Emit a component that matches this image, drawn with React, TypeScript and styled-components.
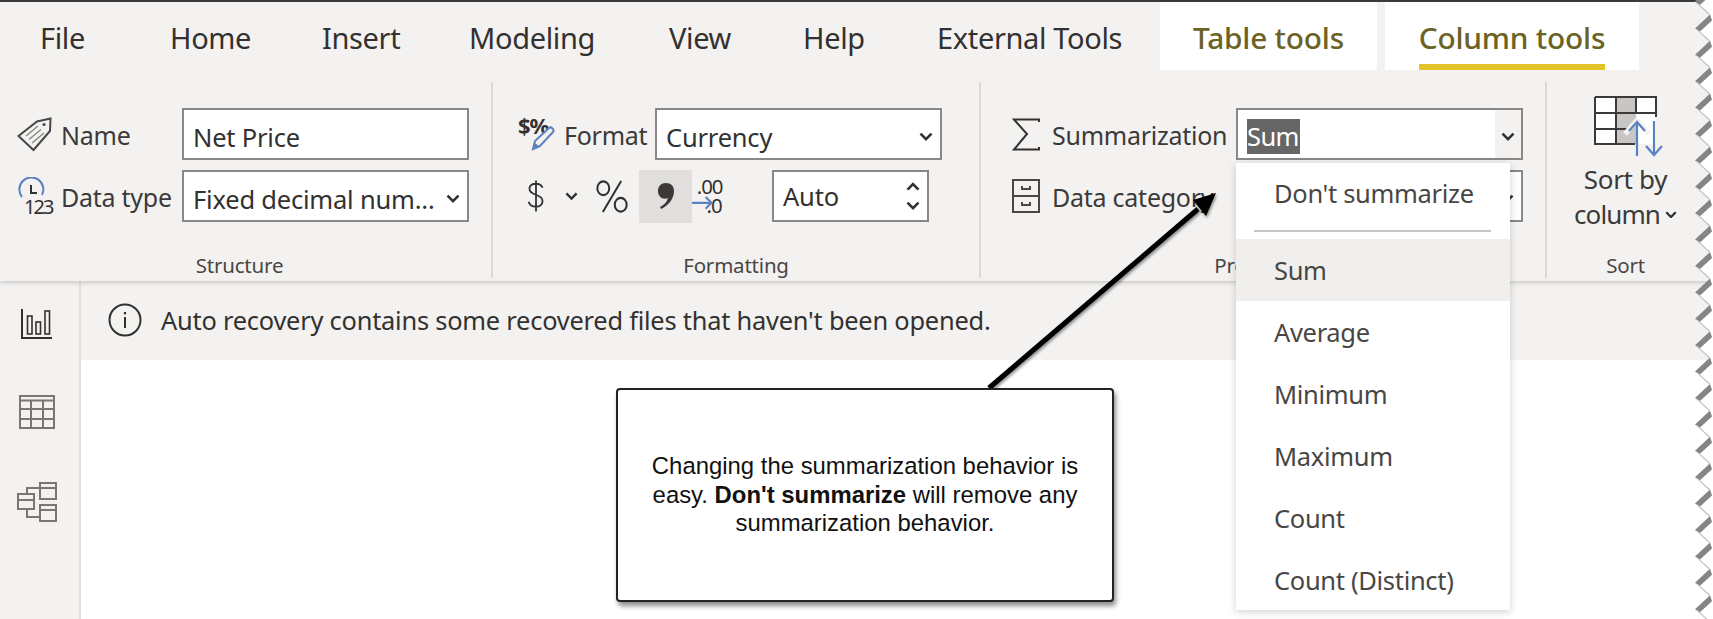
import React from "react";
import styled, { createGlobalStyle } from "styled-components";

const Global = createGlobalStyle`
  html, body { margin: 0; padding: 0; background: #fff; }
  * { box-sizing: border-box; }
`;
const UI = `"Noto Sans", "Open Sans", sans-serif`;

const Page = styled.div`
  position: relative; width: 1713px; height: 619px; overflow: hidden; background: #fff;
  font-family: ${UI}; color: #323130; display: flex; flex-direction: column;
`;
const Ribbon = styled.div`
  height: 281px; background: #f3f2f1; border-top: 2px solid #3a3a3a; flex: none;
  position: relative; z-index: 2; box-shadow: 0 1px 5px rgba(0,0,0,.22);
`;
const TabBar = styled.div`
  height: 68px; display: grid; padding-left: 40px; align-items: stretch;
  grid-template-columns: 130px 152px 147px 200px 134px 134px 223px 217px 8px 254px;
  grid-template-rows: 68px;
`;
const Tab = styled.div`
  font-size: 29px; letter-spacing: -0.35px; line-height: 72px; white-space: nowrap;
`;
const ToolTab = styled.div`
  background: #fff; color: #6b6226; font-size: 29.8px; font-weight: 500; letter-spacing: -0.2px;
  text-align: center; line-height: 72px; white-space: nowrap; overflow: hidden;
`;
const Underline = styled.div`
  width: fit-content; margin: 0 auto; height: 68px; border-bottom: 6px solid #e3c52a;
`;
const Groups = styled.div`
  display: flex; height: 196px; margin-top: 12px;
`;
const Group = styled.div<{ $w: number; $pad: number; $last?: boolean }>`
  width: ${p => p.$w}px; padding-left: ${p => p.$pad}px; padding-top: 26px; flex: none;
  position: relative; display: flex; flex-direction: column; gap: 10px;
  border-right: ${p => (p.$last ? "none" : "2px solid #dcdad8")};
`;
const GroupLabel = styled.div<{ $inset?: number }>`
  position: absolute; left: 0; right: ${p => p.$inset ?? 0}px; bottom: 0; text-align: center; font-size: 20.5px;
  color: #484644; line-height: 26px; letter-spacing: -0.2px;
`;
const Row = styled.div`
  height: 52px; display: flex; align-items: center;
`;
const IconSlot = styled.div<{ $w: number }>`
  width: ${p => p.$w}px; flex: none; display: flex; align-items: center;
`;
const FieldLabel = styled.div<{ $w: number }>`
  width: ${p => p.$w}px; flex: none; font-size: 25px; letter-spacing: -0.25px; color: #3b3a39; white-space: nowrap;
  padding-top: 2px;
`;
const Field = styled.div<{ $w: number }>`
  width: ${p => p.$w}px; height: 52px; flex: none; background: #fff; border: 2px solid #8a8886;
  display: flex; align-items: center; justify-content: space-between; padding: 5px 7px 0 9px;
  font-size: 25.5px; letter-spacing: -0.2px; white-space: nowrap; position: relative;
`;
const AutoField = styled(Field)`
  padding-top: 0;
`;
const Selected = styled.span`
  background: #666; color: #fff; height: 35px; line-height: 35px; display: inline-block; letter-spacing: -0.6px; width: 53px;
`;
const ChevronCell = styled.div`
  position: absolute; right: 0; top: 0; bottom: 0; width: 26px; background: #f3f2f1; padding-top: 5px;
  display: flex; align-items: center; justify-content: center;
`;
const FormatRow = styled.div`
  height: 54px; margin-top: -1px; display: flex; align-items: center; margin-left: 9px;
`;
const GlyphBtn = styled.div<{ $w: number; $on?: boolean; $pl?: number }>`
  width: ${p => p.$w}px; height: 53px; flex: none; background: ${p => (p.$on ? "#e1dfdd" : "transparent")};
  display: flex; align-items: center; justify-content: ${p => (p.$pl !== undefined ? "flex-start" : "center")};
  padding-left: ${p => p.$pl ?? 0}px;
`;
const Stepper = styled.div`
  display: flex; flex-direction: column; gap: 10px;
`;
const SortCol = styled.div`
  display: flex; flex-direction: column; align-items: center; margin-top: -12px;
`;
const SortGraphic = styled.div`
  margin-left: 12px; margin-bottom: 4px; height: 62px;
`;
const SortText = styled.div<{ $tight?: boolean }>`
  font-size: 26px; letter-spacing: ${p => (p.$tight ? "-0.9px" : "-0.3px")}; line-height: 35px; color: #3b3a39; white-space: nowrap;
  display: flex; align-items: center; gap: 5px;
`;
const Body = styled.div`
  flex: 1; display: flex; min-height: 0;
`;
const Sidebar = styled.div`
  width: 81px; flex: none; background: #f3f2f1; border-right: 2px solid #e1dfdd;
  display: flex; flex-direction: column; align-items: center; padding: 27px 5px 0 0;
`;
const SideIcon = styled.div<{ $h: number }>`
  height: ${p => p.$h}px; display: flex; justify-content: center; flex: none;
`;
const Main = styled.div`
  flex: 1; display: flex; flex-direction: column;
`;
const Notice = styled.div`
  height: 79px; background: #f3f2f1; display: flex; align-items: center; padding-left: 27px; gap: 19px;
  font-size: 25.4px; letter-spacing: -0.22px; padding-bottom: 2px;
`;
const Menu = styled.div`
  position: absolute; z-index: 4; left: 1236px; top: 163px; width: 274px; height: 447px;
  background: #fff; box-shadow: 0 2px 8px rgba(0,0,0,.18); display: flex; flex-direction: column;
`;
const MenuItem = styled.div<{ $on?: boolean }>`
  height: 62px; padding-left: 38px; line-height: 62px; flex: none; font-size: 25.5px; letter-spacing: -0.32px;
  background: ${p => (p.$on ? "#f0efed" : "transparent")}; color: #484644;
`;
const MenuTop = styled(MenuItem)`
  height: 60px; line-height: 60px;
`;
const MenuRule = styled.div`
  height: 2px; margin: 7px 19px 7px 18px; background: #c8c6c4; flex: none;
`;
const Callout = styled.div`
  position: absolute; z-index: 6; left: 616px; top: 388px; width: 498px; height: 214px;
  background: #fff; border: 2px solid #222; border-radius: 4px; box-shadow: 2px 4px 5px rgba(0,0,0,.45);
  display: flex; align-items: center; justify-content: center; text-align: center; padding: 0 24px;
  font-family: "Liberation Sans", Arial, sans-serif; font-size: 23.9px; line-height: 28.8px; color: #111;
`;
const ArrowLayer = styled.svg`
  position: absolute; z-index: 5; left: 960px; top: 170px; overflow: visible;
`;
const TornEdge = styled.svg`
  position: absolute; z-index: 7; right: 0; top: 0;
`;

const Chev = ({ w = 14, up = false, sw = 2.6 }: { w?: number; up?: boolean; sw?: number }) => (
  <svg width={w} height={w * 0.65} viewBox="0 0 14 9" fill="none">
    <path d={up ? "M1.5 7.5 7 2l5.5 5.5" : "M1.5 1.5 7 7l5.5-5.5"} stroke="#323130" strokeWidth={sw} />
  </svg>
);

const TagIcon = () => (
  <svg width="35" height="35" viewBox="0 0 35 35" fill="none" stroke="#4a4847" strokeWidth="2">
    <path d="M1.5 19 20 4.5 33.5 1.5 33 14 16.5 33z" />
    <circle cx="27" cy="7.5" r="1.6" fill="#4a4847" stroke="none" />
    <path d="M9 19l12-10M12 22.5l12-10M15 26l12-10" strokeWidth="1.4" stroke="#8a8886" />
  </svg>
);
const TypeIcon = () => (
  <svg width="42" height="38" viewBox="0 0 42 38" fill="none">
    <path d="M5 20A12 12 0 1 1 25 18" stroke="#5b82c0" strokeWidth="2" />
    <path d="M14 8v8h6" stroke="#323130" strokeWidth="2" />
    <text x="7" y="37" fontFamily="'Noto Sans', sans-serif" fontSize="20" letterSpacing="-2" fill="#323130">123</text>
  </svg>
);
const FormatIcon = () => (
  <svg width="42" height="36" viewBox="0 0 42 36" fill="none">
    <text x="0" y="18" fontFamily="'Noto Sans', sans-serif" fontSize="22" fontWeight="700" letterSpacing="-1.2" fill="#323130">$%</text>
    <path d="M15 33l2-8L31 12c2-2 6 2 4 4L22 30z" fill="#f3f2f1" stroke="#5b82c0" strokeWidth="2" />
    <path d="M15 34l2-7 5 4z" fill="#5b82c0" />
  </svg>
);
const SigmaIcon = () => (
  <svg width="28" height="33" viewBox="0 0 28 33" fill="none" stroke="#323130" strokeWidth="2">
    <path d="M27 4V1.5H2L15 16 2 31.5h25V29" />
  </svg>
);
const CategoryIcon = () => (
  <svg width="28" height="34" viewBox="0 0 28 34" fill="none" stroke="#4a4847" strokeWidth="2">
    <rect x="1" y="1" width="26" height="32" />
    <path d="M1 17h26M10 7v3h8V7M10 23v3h8v-3" />
  </svg>
);
const Dollar = () => (
  <svg width="20" height="38" viewBox="0 0 22 40" fill="none" stroke="#323130" strokeWidth="2.2">
    <path d="M19 10c-1-3-4-5-8-5-5 0-8 2-8 6 0 9 16 6 16 15 0 4-3 7-8 7-5 0-8-2-9-6M11 1v38" />
  </svg>
);
const Percent = () => (
  <svg width="34" height="33" viewBox="0 0 36 36" fill="none" stroke="#323130" strokeWidth="2.2">
    <ellipse cx="8.5" cy="9" rx="6.5" ry="7.5" />
    <ellipse cx="27.5" cy="27" rx="6.5" ry="7.5" />
    <path d="M28 1 8 35" />
  </svg>
);
const Comma = () => (
  <svg width="18" height="28" viewBox="0 0 18 28">
    <path d="M9 1c5 0 8 3 8 8 0 8-6 15-13 18l-1-2c4-2 7-5 8-9-1 .5-2 .7-3 .7-4 0-7-3-7-7.700s3-8 8-8z" fill="#3b3a39" />
  </svg>
);
const Decimals = () => (
  <svg width="36" height="38" viewBox="0 0 36 38" fill="none">
    <text x="5" y="17" fontFamily="'Noto Sans', sans-serif" fontSize="21" letterSpacing="-1.2" fill="#323130">.00</text>
    <text x="15" y="36" fontFamily="'Noto Sans', sans-serif" fontSize="21" letterSpacing="-1" fill="#323130">.0</text>
    <path d="M0 26h20M14 20l6 6-6 6" stroke="#5b82c0" strokeWidth="2.2" />
  </svg>
);
const SortIcon = () => (
  <svg width="76" height="62" viewBox="0 0 76 62" fill="none">
    <rect x="1" y="1" width="61" height="47" fill="#fff" />
    <rect x="23" y="1" width="19" height="47" fill="#c8c6c4" />
    <path d="M1 1h61v20M1 1v47h40M1 17h61M1 33h34M22 1v47M42 1v16" stroke="#3b3a39" strokeWidth="2" />
    <path d="M31 38 43 24l12 14" stroke="#f3f2f1" strokeWidth="5" />
    <path d="M43 26v34M35 35l8-9 8 9" stroke="#5b82c0" strokeWidth="2.2" />
    <path d="M60 25v34M52 50l8 9 8-9" stroke="#5b82c0" strokeWidth="2.2" />
  </svg>
);
const ReportIcon = () => (
  <svg width="32" height="32" viewBox="0 0 32 32" fill="none" stroke="#323130" strokeWidth="1.6">
    <path d="M1 1v29h30" strokeWidth="2" />
    <rect x="6.5" y="8" width="4.500" height="18" />
    <rect x="15" y="14" width="4.500" height="12" />
    <rect x="24" y="3" width="4.500" height="23" />
  </svg>
);
const TableIcon = () => (
  <svg width="36" height="34" viewBox="0 0 36 34" fill="none" stroke="#797775" strokeWidth="2">
    <rect x="1" y="1" width="34" height="32" />
    <path d="M1 5.500h34M1 14h34M1 24h34M12 6v27M24 6v27" />
  </svg>
);
const ModelIcon = () => (
  <svg width="40" height="40" viewBox="0 0 40 40" fill="none" stroke="#797775" strokeWidth="2">
    <rect x="1" y="12" width="16" height="15" />
    <path d="M1 18h16M23 1h16v16H23zM23 6h16M23 23h16v16H23zM23 28h16M10 12V6h13M10 27v8h13" />
  </svg>
);
const InfoIcon = () => (
  <svg width="34" height="34" viewBox="0 0 34 34" fill="none" stroke="#323130" strokeWidth="2">
    <circle cx="17" cy="17" r="15.500" />
    <path d="M17 14v11" />
    <path d="M17 9v2.400" strokeWidth="2.200" />
  </svg>
);

const PITCH = 26.4;
const teeth = Array.from({ length: 25 }, (_, i) => i * PITCH + 2);
const zig = teeth.map(y => `16,${y - 14} 1,${y}`).join(" ");

const Arrow = () => (
  <ArrowLayer width="270" height="230" viewBox="0 0 270 230">
    <defs>
      <filter id="arrow-shadow" x="-20%" y="-20%" width="140%" height="140%">
        <feDropShadow dx="1" dy="2" stdDeviation="1.500" floodOpacity=".45" />
      </filter>
    </defs>
    <g filter="url(#arrow-shadow)">
      <path d="M29 218 238 39" stroke="#000" strokeWidth="5" />
      <path d="M256 23 246 46 233 30z" fill="#000" />
    </g>
  </ArrowLayer>
);

export default function App() {
  return (
    <Page>
      <Global />
      <Ribbon>
        <TabBar>
          <Tab>File</Tab>
          <Tab>Home</Tab>
          <Tab>Insert</Tab>
          <Tab>Modeling</Tab>
          <Tab>View</Tab>
          <Tab>Help</Tab>
          <Tab>External Tools</Tab>
          <ToolTab>Table tools</ToolTab>
          <div />
          <ToolTab><Underline>Column tools</Underline></ToolTab>
        </TabBar>
        <Groups>
          <Group $w={493} $pad={17}>
            <Row>
              <IconSlot $w={44}><TagIcon /></IconSlot>
              <FieldLabel $w={121}>Name</FieldLabel>
              <Field $w={287}>Net Price</Field>
            </Row>
            <Row>
              <IconSlot $w={44}><TypeIcon /></IconSlot>
              <FieldLabel $w={121}>Data type</FieldLabel>
              <Field $w={287}>Fixed decimal num...<Chev /></Field>
            </Row>
            <GroupLabel $inset={12}>Structure</GroupLabel>
          </Group>
          <Group $w={488} $pad={25}>
            <Row>
              <IconSlot $w={46}><FormatIcon /></IconSlot>
              <FieldLabel $w={91}>Format</FieldLabel>
              <Field $w={287}>Currency<Chev /></Field>
            </Row>
            <FormatRow>
              <GlyphBtn $w={18}><Dollar /></GlyphBtn>
              <GlyphBtn $w={47} $pl={20}><Chev w={13} /></GlyphBtn>
              <GlyphBtn $w={47} $pl={3}><Percent /></GlyphBtn>
              <GlyphBtn $w={53} $on><Comma /></GlyphBtn>
              <GlyphBtn $w={35}><Decimals /></GlyphBtn>
              <GlyphBtn $w={45} />
              <AutoField $w={157}>
                Auto
                <Stepper><Chev w={14} up /><Chev w={14} /></Stepper>
              </AutoField>
            </FormatRow>
            <GroupLabel>Formatting</GroupLabel>
          </Group>
          <Group $w={566} $pad={31}>
            <Row>
              <IconSlot $w={40}><SigmaIcon /></IconSlot>
              <FieldLabel $w={184}>Summarization</FieldLabel>
              <Field $w={287}>
                <Selected>Sum</Selected>
                <ChevronCell><Chev /></ChevronCell>
              </Field>
            </Row>
            <Row>
              <IconSlot $w={40}><CategoryIcon /></IconSlot>
              <FieldLabel $w={184}>Data category</FieldLabel>
              <Field $w={287}><span /><Chev /></Field>
            </Row>
            <GroupLabel>Properties</GroupLabel>
          </Group>
          <Group $w={157} $pad={0} $last>
            <SortCol>
              <SortGraphic><SortIcon /></SortGraphic>
              <SortText>Sort by</SortText>
              <SortText $tight>column<Chev w={12} /></SortText>
            </SortCol>
            <GroupLabel>Sort</GroupLabel>
          </Group>
        </Groups>
      </Ribbon>
      <Body>
        <Sidebar>
          <SideIcon $h={87}><ReportIcon /></SideIcon>
          <SideIcon $h={87}><TableIcon /></SideIcon>
          <SideIcon $h={60}><ModelIcon /></SideIcon>
        </Sidebar>
        <Main>
          <Notice>
            <InfoIcon />
            Auto recovery contains some recovered files that haven't been opened.
          </Notice>
        </Main>
      </Body>
      <Menu>
        <MenuTop>Don't summarize</MenuTop>
        <MenuRule />
        <MenuItem $on>Sum</MenuItem>
        <MenuItem>Average</MenuItem>
        <MenuItem>Minimum</MenuItem>
        <MenuItem>Maximum</MenuItem>
        <MenuItem>Count</MenuItem>
        <MenuItem>Count (Distinct)</MenuItem>
      </Menu>
      <Arrow />
      <Callout>
        <div>
          Changing the summarization behavior is easy. <b>Don't summarize</b> will remove any summarization behavior.
        </div>
      </Callout>
      <TornEdge width="19" height="619" viewBox="0 0 19 619">
        <defs>
          <filter id="edge-blur"><feGaussianBlur stdDeviation="0.700" /></filter>
        </defs>
        <polygon points={`19,-20 ${zig} 19,640`} fill="#fff" />
        <g filter="url(#edge-blur)">
          {teeth.map(y => (
            <React.Fragment key={y}>
              <polygon points={`1,${y} 16,${y - 14} 18,${y - 8} 6,${y + 3}`} fill="#858585" />
              <polygon points={`1,${y} 6,${y + 3} 16,${y + 12} 15,${y + 13}`} fill="#c4c4c4" />
            </React.Fragment>
          ))}
        </g>
      </TornEdge>
    </Page>
  );
}
